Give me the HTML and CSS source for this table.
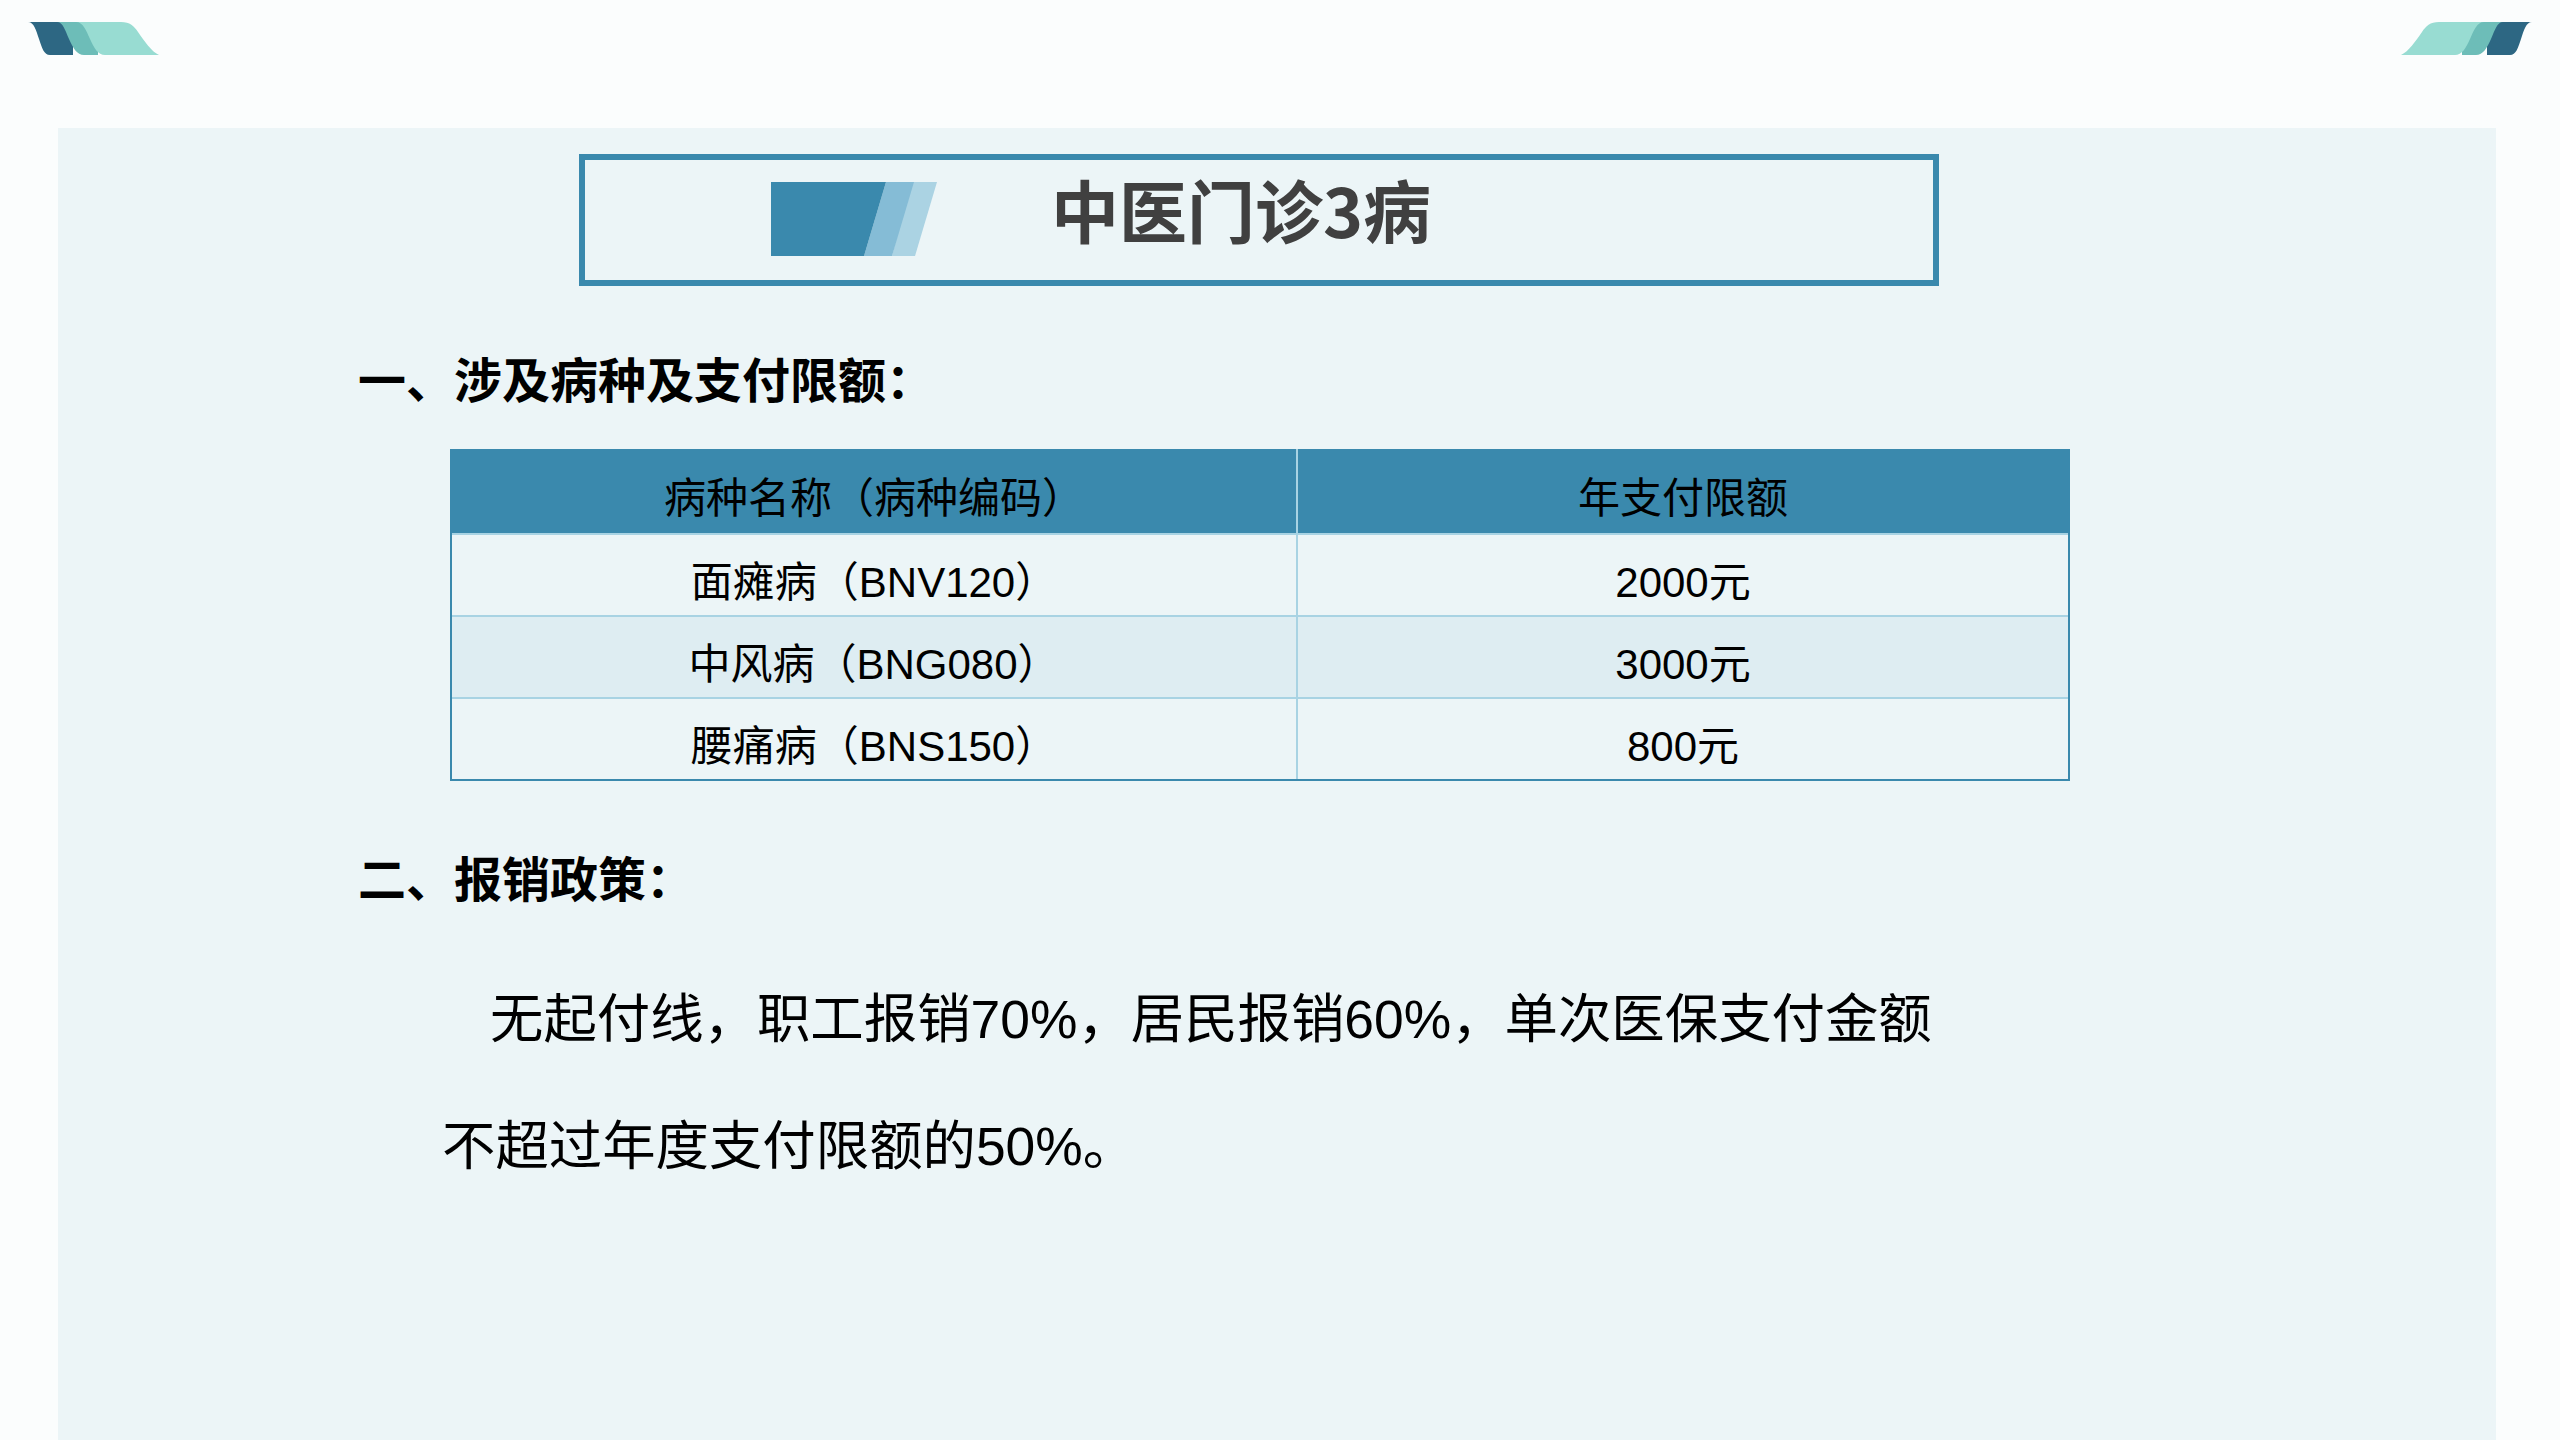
FILE: index.html
```html
<!DOCTYPE html>
<html lang="zh-CN">
<head>
<meta charset="utf-8">
<title>中医门诊3病</title>
<link rel="stylesheet" href="styles.css">
</head>
<body>
<header class="topbar">
  <svg class="logo" width="131" height="33" viewBox="0 0 131 33" aria-hidden="true">
    <path fill="#2d6783" d="M0,0 H45 V33 H22 C16,33 14,26 11,17 C8,8 6,0 0,0 Z"/>
    <path fill="#6dbdb8" d="M29,0 H70 V33 H56 C49,33 45,26 41,17 C37,8 35,0 29,0 Z"/>
    <path fill="#98dcd2" d="M48,0 H93 C102,0 106,4 110,10 C117,20 123,29 131,33 H77 C70,33 66,26 62,17 C58,8 55,0 48,0 Z"/>
  </svg>
  <svg class="logo logo-right" width="131" height="33" viewBox="0 0 131 33" aria-hidden="true">
    <path fill="#2d6783" d="M0,0 H45 V33 H22 C16,33 14,26 11,17 C8,8 6,0 0,0 Z"/>
    <path fill="#6dbdb8" d="M29,0 H70 V33 H56 C49,33 45,26 41,17 C37,8 35,0 29,0 Z"/>
    <path fill="#98dcd2" d="M48,0 H93 C102,0 106,4 110,10 C117,20 123,29 131,33 H77 C70,33 66,26 62,17 C58,8 55,0 48,0 Z"/>
  </svg>
</header>
<main class="panel">
  <div class="title-box">
    <svg class="title-deco" width="166" height="74" viewBox="0 0 166 74" aria-hidden="true">
      <polygon fill="#abd3e3" points="140,0 166,0 144,74 121,74"/>
      <polygon fill="#85bcd6" points="115,0 143,0 121,74 93,74"/>
      <polygon fill="#3a89ad" points="0,0 115,0 93,74 0,74"/>
    </svg>
    <h1 class="title">中医门诊3病</h1>
  </div>

  <h2 class="section-head head-1">一、涉及病种及支付限额：</h2>

  <div class="table">
    <div class="cell th c1">病种名称（病种编码）</div>
    <div class="cell th c2">年支付限额</div>
    <div class="cell td c1">面瘫病（BNV120）</div>
    <div class="cell td c2">2000元</div>
    <div class="cell td c1 alt">中风病（BNG080）</div>
    <div class="cell td c2 alt">3000元</div>
    <div class="cell td c1">腰痛病（BNS150）</div>
    <div class="cell td c2">800元</div>
  </div>

  <h2 class="section-head head-2">二、报销政策：</h2>

  <p class="policy">无起付线，职工报销70%，居民报销60%，单次医保支付金额<br>不超过年度支付限额的50%。</p>
</main>
</body>
</html>
```

FILE: styles.css
```css
html, body {
  margin: 0;
  padding: 0;
}

body {
  background: #fbfdfd;
  width: 2560px;
  height: 1440px;
  overflow: hidden;
  font-family: "Liberation Sans", "Noto Sans CJK SC", sans-serif;
  color: #000;
}

.topbar {
  height: 128px;
  display: flex;
  justify-content: space-between;
  align-items: flex-start;
  padding: 22px 28px 0 28px;
  box-sizing: border-box;
}

.logo {
  display: block;
}

.logo-right {
  transform: scaleX(-1);
}

.panel {
  margin-left: 58px;
  width: 2438px;
  height: 1312px;
  background: #ecf5f7;
  padding-top: 26px;
  box-sizing: border-box;
  overflow: hidden;
}

.title-box {
  margin-left: 521px;
  width: 1360px;
  height: 132px;
  box-sizing: border-box;
  border: 6px solid #3a89ad;
  display: flex;
  align-items: center;
  padding-left: 186px;
}

.title-deco {
  display: block;
  flex: none;
  margin-top: -2px;
}

.title {
  margin: 0 0 0 114px;
  padding-bottom: 22px;
  font-family: "Noto Sans CJK SC", sans-serif;
  font-weight: 700;
  font-size: 68px;
  line-height: 1;
  color: #404040;
}

.section-head {
  margin: 0 0 0 300px;
  font-family: "Noto Sans CJK SC", sans-serif;
  font-weight: 700;
  font-size: 48px;
  line-height: 48px;
  color: #000;
}

.head-1 {
  margin-top: 67px;
}

.head-2 {
  margin-top: 71px;
}

.table {
  margin: 48px 0 0 392px;
  width: 1620px;
  display: grid;
  grid-template-columns: 846px 1fr;
  border-left: 2px solid #3a89ad;
  border-right: 2px solid #3a89ad;
  border-bottom: 2px solid #3a89ad;
  box-sizing: border-box;
}

.cell {
  display: flex;
  align-items: center;
  justify-content: center;
  font-size: 42px;
  line-height: 42px;
  padding-top: 16px;
  box-sizing: border-box;
  white-space: nowrap;
}

.c1 {
  border-right: 2px solid #a8d3e3;
}

.th {
  height: 84px;
  background: #3a89ad;
}

.td {
  height: 82px;
  background: #ecf5f7;
  border-top: 2px solid #a8d3e3;
}

.td.alt {
  background: #deedf2;
}

.policy {
  margin: 56px 0 0 384px;
  font-size: 53.4px;
  line-height: 127px;
  text-indent: 48px;
  color: #000;
}
```
